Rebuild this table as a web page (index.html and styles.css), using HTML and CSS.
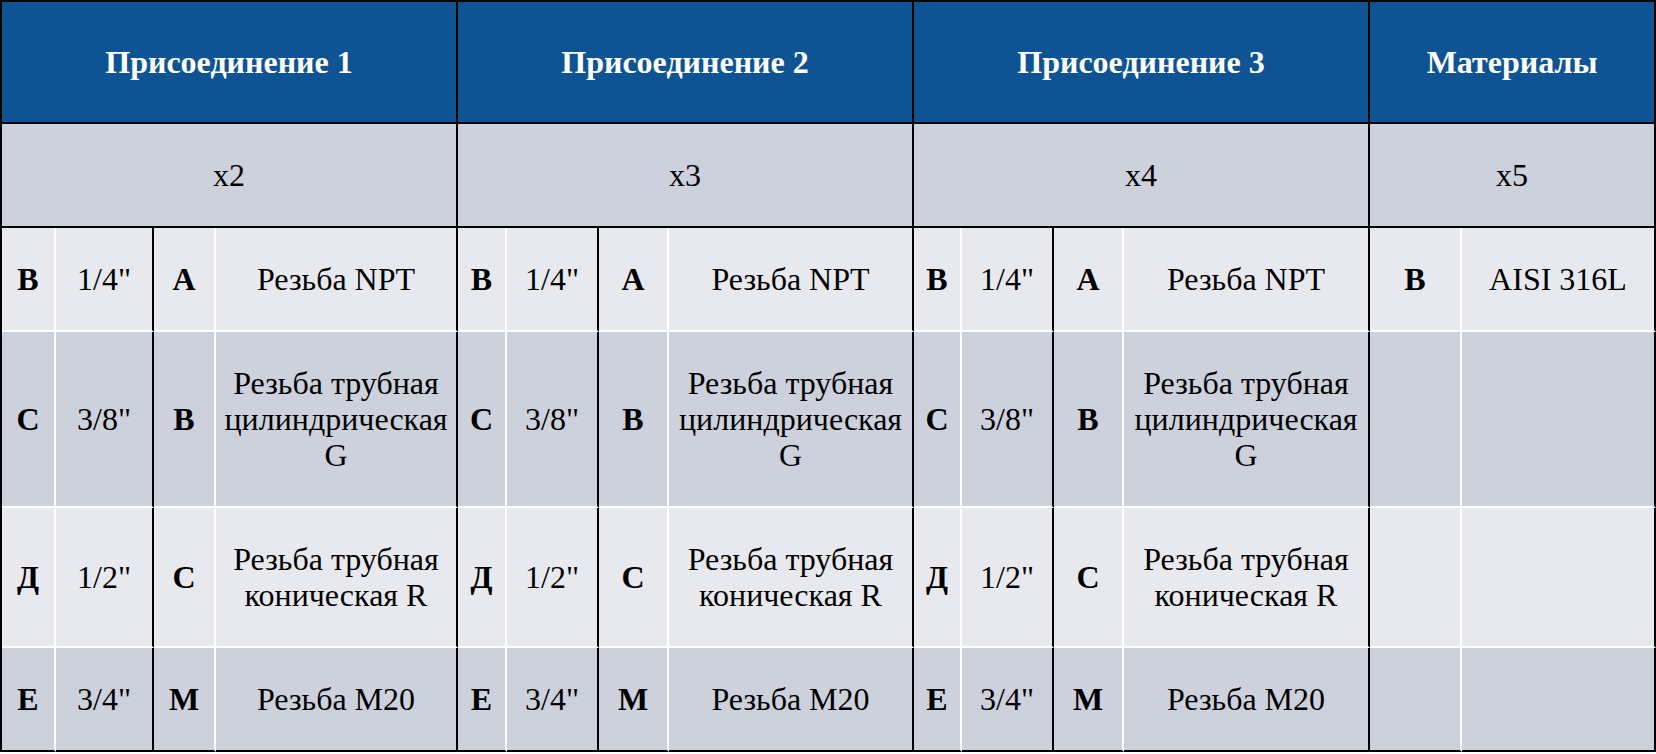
FILE: index.html
```html
<!DOCTYPE html>
<html lang="ru">
<head>
<meta charset="utf-8">
<title>Присоединения</title>
<link rel="stylesheet" href="styles.css">
</head>
<body>
<div class="spec">
  <div class="cell head span4 sep">Присоединение 1</div>
  <div class="cell head span4 sep">Присоединение 2</div>
  <div class="cell head span4 sep">Присоединение 3</div>
  <div class="cell head span2 sep">Материалы</div>

  <div class="cell sub span4 sep">x2</div>
  <div class="cell sub span4 sep">x3</div>
  <div class="cell sub span4 sep">x4</div>
  <div class="cell sub span2 sep">x5</div>

  <!-- row 1 -->
  <div class="cell light b wl">В</div><div class="cell light sep">1/4"</div><div class="cell light b wl">A</div><div class="cell light sep">Резьба NPT</div>
  <div class="cell light b wl">В</div><div class="cell light sep">1/4"</div><div class="cell light b wl">A</div><div class="cell light sep">Резьба NPT</div>
  <div class="cell light b wl">В</div><div class="cell light sep">1/4"</div><div class="cell light b wl">A</div><div class="cell light sep">Резьба NPT</div>
  <div class="cell light b wl">В</div><div class="cell light sep">AISI 316L</div>

  <!-- row 2 -->
  <div class="cell dark b wl">С</div><div class="cell dark sep">3/8"</div><div class="cell dark b wl">B</div><div class="cell dark sep">Резьба трубная цилиндрическая G</div>
  <div class="cell dark b wl">С</div><div class="cell dark sep">3/8"</div><div class="cell dark b wl">B</div><div class="cell dark sep">Резьба трубная цилиндрическая G</div>
  <div class="cell dark b wl">С</div><div class="cell dark sep">3/8"</div><div class="cell dark b wl">B</div><div class="cell dark sep">Резьба трубная цилиндрическая G</div>
  <div class="cell dark wl"></div><div class="cell dark sep"></div>

  <!-- row 3 -->
  <div class="cell light b wl">Д</div><div class="cell light sep">1/2"</div><div class="cell light b wl">C</div><div class="cell light sep">Резьба трубная коническая R</div>
  <div class="cell light b wl">Д</div><div class="cell light sep">1/2"</div><div class="cell light b wl">C</div><div class="cell light sep">Резьба трубная коническая R</div>
  <div class="cell light b wl">Д</div><div class="cell light sep">1/2"</div><div class="cell light b wl">C</div><div class="cell light sep">Резьба трубная коническая R</div>
  <div class="cell light wl"></div><div class="cell light sep"></div>

  <!-- row 4 -->
  <div class="cell dark last b wl">Е</div><div class="cell dark last sep">3/4"</div><div class="cell dark last b wl">M</div><div class="cell dark last sep">Резьба M20</div>
  <div class="cell dark last b wl">Е</div><div class="cell dark last sep">3/4"</div><div class="cell dark last b wl">M</div><div class="cell dark last sep">Резьба M20</div>
  <div class="cell dark last b wl">Е</div><div class="cell dark last sep">3/4"</div><div class="cell dark last b wl">M</div><div class="cell dark last sep">Резьба M20</div>
  <div class="cell dark last wl"></div><div class="cell dark last sep"></div>
</div>
</body>
</html>
```

FILE: styles.css
```css
html, body {
  margin: 0;
  padding: 0;
  background: #ffffff;
}

.spec {
  display: grid;
  grid-template-columns:
    54px 98px 62px 242px
    49px 92px 70px 245px
    48px 92px 70px 246px
    92px 194px;
  width: max-content;
  border-left: 2px solid #000;
  border-top: 2px solid #000;
  font-family: "Liberation Serif", "Times New Roman", serif;
  font-size: 32px;
  line-height: 36px;
  color: #000;
}

.cell {
  box-sizing: border-box;
  display: flex;
  align-items: center;
  justify-content: center;
  text-align: center;
  padding: 33px 0;
  border-right: 2px solid #000;
  border-bottom: 2px solid #fff;
  min-width: 0;
}

.span4 { grid-column: span 4; }
.span2 { grid-column: span 2; }

.head {
  background: #0e5394;
  color: #fff;
  font-weight: bold;
  padding: 42px 0;
  border-bottom-color: #000;
}

.sub {
  background: #cdd1dc;
  border-bottom-color: #000;
}

.light { background: #e8e9ee; }
.dark { background: #cdd1dc; }

.b { font-weight: bold; }

.wl { border-right-color: #fff; }
.sep { border-right-color: #000; }
.last { border-bottom-color: #000; }
```
